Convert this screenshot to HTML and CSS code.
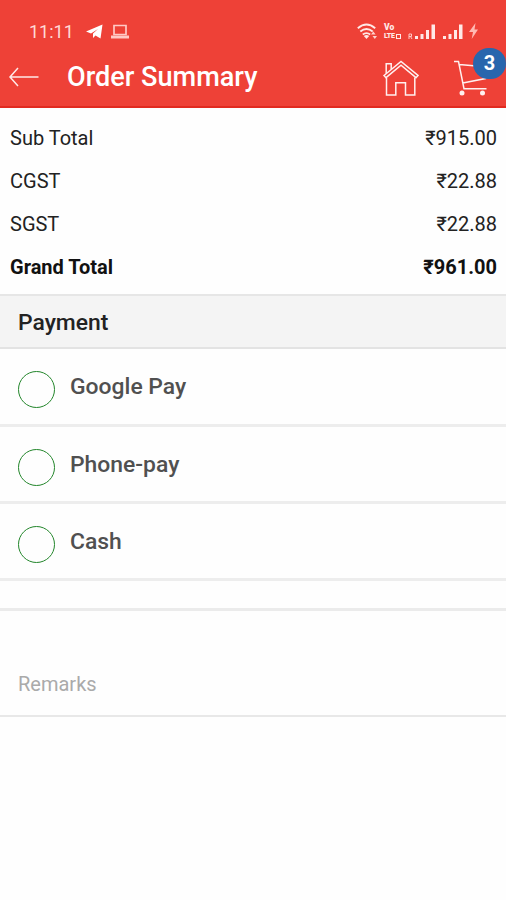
FILE: index.html
```html
<!DOCTYPE html>
<html lang="en">
<head>
<meta charset="utf-8">
<title>Order Summary</title>
<link rel="stylesheet" href="styles.css">
</head>
<body>
<header class="header">
  <div class="status">
    <span class="time">11:11</span>
    <svg class="telegram" width="18" height="16" viewBox="0 0 18 16"><path d="M0 8.500 16.500 1.500 14.500 15.500 9.500 12.500 7 15V10.500L12 6 5 10.500Z" fill="#fff"/></svg>
    <svg class="laptop" width="18" height="16" viewBox="0 0 18 16"><path d="M3 2.500h12v9H3z" fill="none" stroke="#ffc9c5" stroke-width="1.700"/><path d="M0 12.500h18v3H0z" fill="#ffc9c5"/></svg>
    <svg class="wifi" width="21" height="17" viewBox="0 0 21 17"><g fill="none" stroke="#ffe9e7" stroke-width="1.900"><path d="M.8 5.200Q9.500-2 18.200 5.200"/><path d="M3.300 8.500Q9.500 3.500 15.700 8.500"/><path d="M5.800 11.500Q9.500 8.700 13.200 11.500"/></g><path d="m9.500 16-2.700-3q2.700-2 5.400 0z" fill="#ffe9e7"/><path d="m14 11.500 2.300-3 2.300 3zm1.500 1.500h4.500l-2.200 3z" fill="#ffd2ce"/></svg>
    <div class="volte"><span>Vo</span><span class="lte">LTE<i></i></span></div>
    <svg class="signal-r" width="28" height="17" viewBox="0 0 28 17"><path d="M1 16v-5h2.500v2.500H1m1.500 0L4 16" fill="none" stroke="#ffc9c5"/><path d="M7 13h3v3H7zm5.500-2h3v5h-3zm5.500-4h3v9h-3zm5.500-5.500h3.500V16h-3.500z" fill="#ffe9e7"/></svg>
    <svg class="signal" width="21" height="17" viewBox="0 0 21 17"><path d="M0 13h3v3H0zm5.500-2h3v5h-3zm5.500-4h3v9h-3zm5-5.500h3.500V16H16z" fill="#ffe9e7"/></svg>
    <svg class="bolt" width="10" height="16" viewBox="0 0 10 16"><path d="M6.500 0 0 9h4L2.700 16 9 6.500H5.500z" fill="#ffb9b3"/></svg>
  </div>
  <div class="bar">
    <svg class="back" width="32" height="20" viewBox="0 0 32 20"><path d="M10 1 2 10l8 9M2 10h28.500" fill="none" stroke="#ffe9e7" stroke-width="1.500"/></svg>
    <h1 class="title">Order Summary</h1>
    <svg class="home" width="36" height="38" viewBox="0 0 36 38"><g fill="none" stroke="#fff0ef" stroke-width="1.500"><path d="m1 15.500 17-14 17 14-2 2.200L18 5.200 3 17.700z"/><path d="M3.200 13.500V3.700h5v5.500"/><path d="M3.500 18v17h9.300V22.700h9.700V35h9.300V17.500"/></g></svg>
    <div class="cart">
      <svg width="36" height="38" viewBox="0 0 36 38"><g fill="none" stroke="#fff0ef" stroke-width="1.500"><path d="M1 1.500h4.500L11 28.700h22.500M6.200 4.500 35 7M9.800 23 32.500 18.500 35 8"/></g><circle cx="9" cy="33" r="2.500" fill="#fff0ef"/><circle cx="29.500" cy="33" r="2.500" fill="#fff0ef"/></svg>
      <span class="badge">3</span>
    </div>
  </div>
</header>
<main>
  <section class="totals">
    <div class="row"><span>Sub Total</span><span>₹915.00</span></div>
    <div class="row"><span>CGST</span><span>₹22.88</span></div>
    <div class="row"><span>SGST</span><span>₹22.88</span></div>
    <div class="row grand"><span>Grand Total</span><span>₹961.00</span></div>
  </section>
  <h2 class="section-title">Payment</h2>
  <div class="option"><span class="radio"></span><span class="label">Google Pay</span></div>
  <div class="option"><span class="radio"></span><span class="label">Phone-pay</span></div>
  <div class="option"><span class="radio"></span><span class="label">Cash</span></div>
  <div class="spacer"></div>
  <div class="remarks">Remarks</div>
</main>
</body>
</html>
```
FILE: styles.css
```css
* { box-sizing: border-box; }
body {
  margin: 0;
  background: #fefefe;
  font-family: Roboto, "Noto Sans", sans-serif;
  color: #222;
}
svg { display: block; flex: none; }
.header {
  height: 108px;
  background: #ee4137;
  border-bottom: 2px solid #e12a20;
  color: #fff;
}
.status {
  display: flex;
  height: 47px;
  padding: 23px 0 0 29px;
}
.time {
  width: 57px;
  font-size: 18px;
  line-height: 17px;
  color: #ffd9d6;
}
.laptop { margin-left: 7px; }
.wifi { margin-left: 228px; }
.volte {
  display: flex;
  flex-direction: column;
  width: 20px;
  margin: 0 0 0 6px;
  font-size: 8.5px;
  line-height: 9px;
  font-weight: 900;
  color: #ffe9e7;
}
.lte { display: flex; align-items: center; font-size: 7px; line-height: 8px; letter-spacing: -.3px; }
.lte i { width: 5px; height: 5px; margin-left: 1px; border: 1.5px solid #ffe9e7; }
.signal-r { margin-left: 4px; }
.signal { margin-left: 7px; }
.bolt { margin-left: 5px; }
.bar {
  display: flex;
  height: 59px;
  padding-left: 8px;
}
.back { margin-top: 20px; }
.title {
  width: 315px;
  margin: 14px 0 0 27px;
  font-size: 27.1px;
  line-height: 32px;
  font-weight: 500;
}
.home { margin: 13px 0 0 1px; }
.cart { position: relative; margin: 13px 0 0 34px; }
.badge {
  position: absolute;
  left: 20px;
  top: -12px;
  width: 33px;
  height: 31px;
  border-radius: 16px;
  background: #2866ad;
  font-size: 20px;
  line-height: 30px;
  font-weight: 700;
  text-align: center;
}
.totals { height: 186px; padding: 9px 9px 0 10px; }
.row {
  display: flex;
  justify-content: space-between;
  height: 43px;
  font-size: 20px;
  line-height: 43px;
}
.grand { font-weight: 700; color: #111; }
.section-title {
  height: 55px;
  margin: 0;
  padding-left: 18px;
  border-top: 2px solid #e6e6e6;
  border-bottom: 2px solid #e3e3e3;
  background: #f4f4f4;
  font-size: 22.9px;
  line-height: 53px;
  font-weight: 500;
}
.option {
  display: flex;
  height: 77px;
  padding: 22px 0 0 18px;
  border-bottom: 3px solid #ededed;
}
.section-title + .option { height: 78px; }
.radio {
  width: 37px;
  height: 37px;
  border: 1.5px solid #23862b;
  border-radius: 50%;
}
.label {
  margin-left: 15px;
  font-size: 22.9px;
  line-height: 32px;
  font-weight: 500;
  color: #505050;
}
.spacer { height: 30px; border-bottom: 3px solid #ebebeb; }
.remarks {
  height: 106px;
  padding: 59px 0 0 18px;
  border-bottom: 2px solid #e8e8e8;
  font-size: 20px;
  line-height: 28px;
  color: #aaa;
}
```
